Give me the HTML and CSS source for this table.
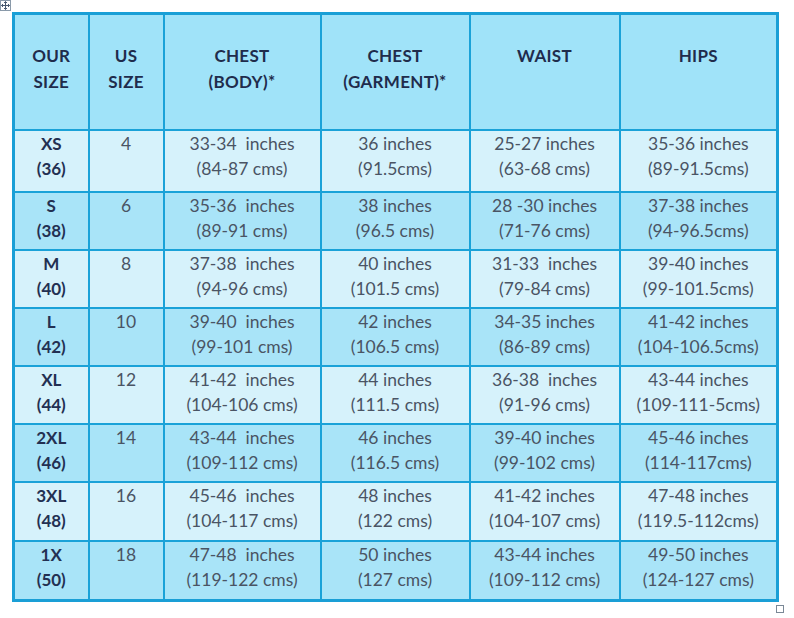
FILE: index.html
```html
<!DOCTYPE html>
<html lang="en">
<head>
<meta charset="utf-8">
<title>Size chart</title>
<link rel="stylesheet" href="styles.css">
</head>
<body>
<div class="page">
  <span class="move-handle" aria-hidden="true">
    <svg width="9" height="9" viewBox="0 0 9 9"><path d="M4.5 0.5V8.5M0.5 4.5H8.5M3 2L4.5 0.5L6 2M3 7L4.5 8.5L6 7M2 3L0.5 4.5L2 6M7 3L8.5 4.5L7 6" fill="none" stroke="#4a5a70" stroke-width="1"/></svg>
  </span>
  <table class="chart">
    <colgroup>
      <col class="c1"><col class="c2"><col class="c3"><col class="c4"><col class="c5"><col class="c6">
    </colgroup>
    <thead>
      <tr class="head">
        <th>OUR<br>SIZE</th>
        <th>US<br>SIZE</th>
        <th>CHEST<br>(BODY)*</th>
        <th>CHEST<br>(GARMENT)*</th>
        <th>WAIST</th>
        <th>HIPS</th>
      </tr>
    </thead>
    <tbody>
      <tr class="light r1">
        <td class="size">XS<br>(36)</td><td>4</td>
        <td>33-34&nbsp; inches<br>(84-87 cms)</td><td>36 inches<br>(91.5cms)</td>
        <td>25-27 inches<br>(63-68 cms)</td><td>35-36 inches<br>(89-91.5cms)</td>
      </tr>
      <tr class="dark">
        <td class="size">S<br>(38)</td><td>6</td>
        <td>35-36&nbsp; inches<br>(89-91 cms)</td><td>38 inches<br>(96.5 cms)</td>
        <td>28 -30 inches<br>(71-76 cms)</td><td>37-38 inches<br>(94-96.5cms)</td>
      </tr>
      <tr class="light">
        <td class="size">M<br>(40)</td><td>8</td>
        <td>37-38&nbsp; inches<br>(94-96 cms)</td><td>40 inches<br>(101.5 cms)</td>
        <td>31-33&nbsp; inches<br>(79-84 cms)</td><td>39-40 inches<br>(99-101.5cms)</td>
      </tr>
      <tr class="dark">
        <td class="size">L<br>(42)</td><td>10</td>
        <td>39-40&nbsp; inches<br>(99-101 cms)</td><td>42 inches<br>(106.5 cms)</td>
        <td>34-35 inches<br>(86-89 cms)</td><td>41-42 inches<br>(104-106.5cms)</td>
      </tr>
      <tr class="light">
        <td class="size">XL<br>(44)</td><td>12</td>
        <td>41-42&nbsp; inches<br>(104-106 cms)</td><td>44 inches<br>(111.5 cms)</td>
        <td>36-38&nbsp; inches<br>(91-96 cms)</td><td>43-44 inches<br>(109-111-5cms)</td>
      </tr>
      <tr class="dark">
        <td class="size">2XL<br>(46)</td><td>14</td>
        <td>43-44&nbsp; inches<br>(109-112 cms)</td><td>46 inches<br>(116.5 cms)</td>
        <td>39-40 inches<br>(99-102 cms)</td><td>45-46 inches<br>(114-117cms)</td>
      </tr>
      <tr class="light r7">
        <td class="size">3XL<br>(48)</td><td>16</td>
        <td>45-46&nbsp; inches<br>(104-117 cms)</td><td>48 inches<br>(122 cms)</td>
        <td>41-42 inches<br>(104-107 cms)</td><td>47-48 inches<br>(119.5-112cms)</td>
      </tr>
      <tr class="dark r8">
        <td class="size">1X<br>(50)</td><td>18</td>
        <td>47-48&nbsp; inches<br>(119-122 cms)</td><td>50 inches<br>(127 cms)</td>
        <td>43-44 inches<br>(109-112 cms)</td><td>49-50 inches<br>(124-127 cms)</td>
      </tr>
    </tbody>
  </table>
  <span class="resize-handle" aria-hidden="true"></span>
</div>
</body>
</html>
```

FILE: styles.css
```css
html, body {
  margin: 0;
  padding: 0;
  background: #ffffff;
}

.page {
  position: relative;
  width: 794px;
  height: 618px;
  padding: 12px 0 0 12px;
  box-sizing: border-box;
  font-family: Lato, "Open Sans", sans-serif;
}

.move-handle {
  position: absolute;
  left: 0;
  top: 0;
  width: 9px;
  height: 9px;
  border: 1px solid #8a9aaa;
  background: #ffffff;
  display: flex;
  align-items: center;
  justify-content: center;
}

.move-handle svg {
  display: block;
}

.resize-handle {
  position: absolute;
  left: 776px;
  top: 605px;
  width: 6px;
  height: 6px;
  border: 1px solid #7a8896;
  background: #ffffff;
}

.chart {
  width: 764px;
  border-collapse: collapse;
  table-layout: fixed;
  border: 3px solid #1a9fd6;
}

.c1 { width: 75px; }
.c2 { width: 75px; }
.c3 { width: 157px; }
.c4 { width: 149px; }
.c5 { width: 150px; }
.c6 { width: 158px; }

.chart th,
.chart td {
  border: 2px solid #1aa2d8;
  text-align: center;
  vertical-align: top;
  padding: 0;
}

.chart th {
  height: 116px;
  box-sizing: border-box;
  padding-top: 28px;
  background: #a0e3f9;
  color: #1f2c4c;
  font-weight: 700;
  font-size: 17px;
  line-height: 26px;
  letter-spacing: 0.3px;
}

.chart td {
  color: #4a5464;
  font-size: 17.5px;
  line-height: 25px;
  padding-top: 0;
  height: 58px;
  box-sizing: border-box;
}

.chart td.size {
  color: #233052;
  font-weight: 700;
  font-size: 17px;
}

.chart tr.r1 td { height: 62px; }
.chart tr.r7 td { height: 59px; }
.chart tr.r8 td { height: 60px; }

.chart tr.light td { background: #d6f2fb; }
.chart tr.dark td { background: #a9e4f8; }
```
